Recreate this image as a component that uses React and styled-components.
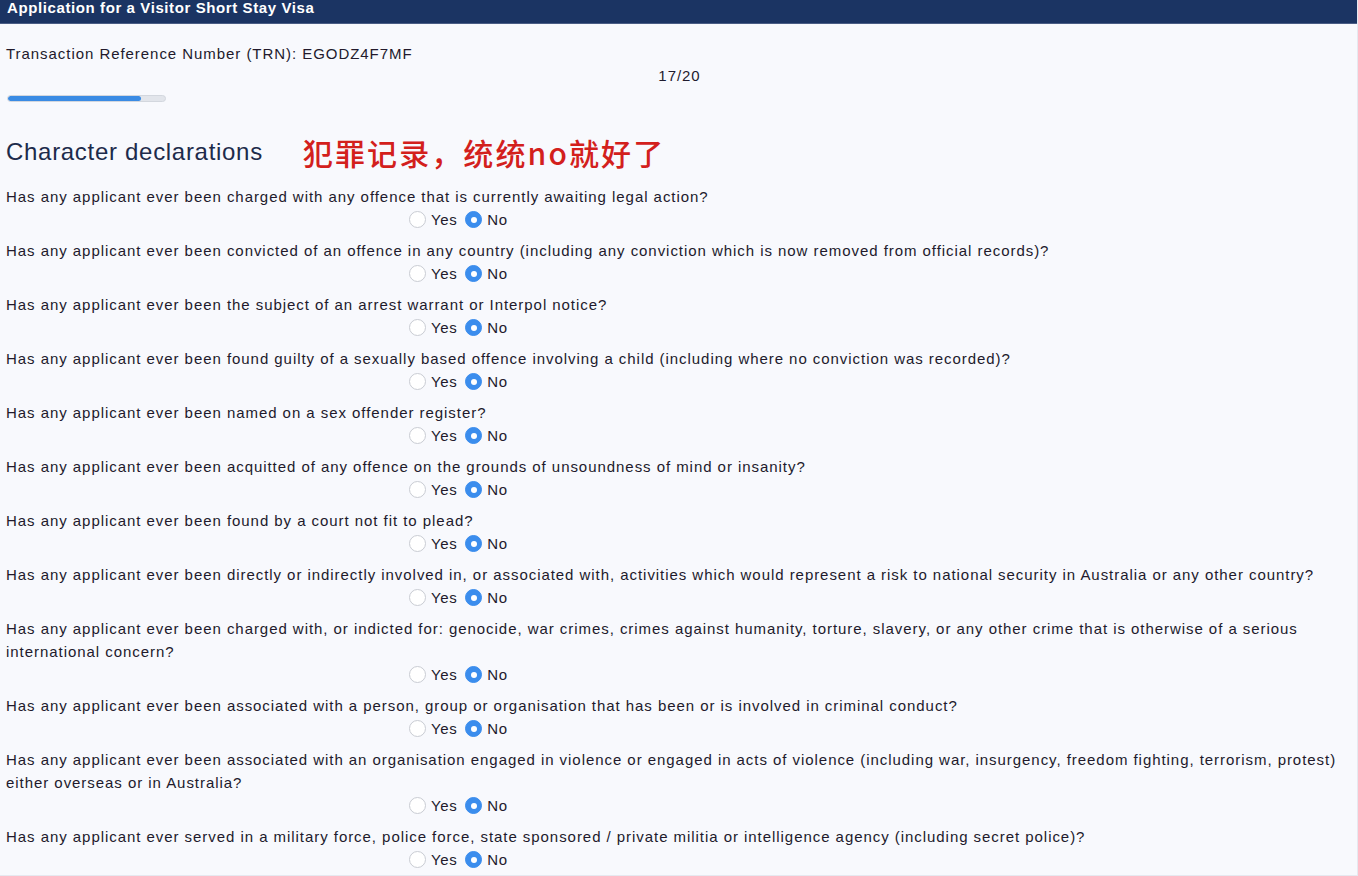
import React from "react";
import styled, { createGlobalStyle } from "styled-components";

const Global = createGlobalStyle`
  html, body { margin: 0; padding: 0; background: #f8f9fd; }
  body { font-family: "Liberation Sans", Arial, sans-serif; color: #1f1b2e; overflow: hidden; }
`;

const Page = styled.div`
  width: 1358px;
  height: 876px;
  box-sizing: border-box;
  background: #f8f9fd;
  border-right: 1px solid #e6e9f0;
  border-bottom: 1px solid #e6e9f0;
  overflow: hidden;
`;

const Header = styled.div`
  height: 23px;
  background: #1b3463;
  border-bottom: 1px solid #4a5d85;
  display: flex;
  align-items: flex-end;
  padding: 0 7px;
  overflow: hidden;
`;

const HeaderTitle = styled.div`
  color: #ffffff;
  font-weight: bold;
  font-size: 15px;
  line-height: 15px;
  margin-bottom: 8px;
  letter-spacing: 0.6px;
`;

const Body = styled.div`
  padding: 0 6px;
  font-size: 15px;
  letter-spacing: 0.95px;
`;

const Trn = styled.div`
  margin-top: 21px;
  line-height: 18px;
  color: #221a2c;
`;

const Counter = styled.div`
  text-align: center;
  line-height: 18px;
  margin-top: 4px;
  padding-left: 2px;
`;

const Progress = styled.div`
  width: 159px;
  height: 7px;
  margin-top: 10px;
  margin-left: 1px;
  border-radius: 4px;
  background: #e2e5eb;
  border: 1px solid #d3d7de;
  overflow: hidden;
  box-sizing: border-box;
`;

const ProgressFill = styled.div`
  height: 100%;
  background: #3a8be4;
  border-radius: 4px;
`;

const HeadingRow = styled.div`
  display: flex;
  align-items: center;
  gap: 40px;
  margin-top: 33px;
  height: 34px;
`;

const Heading = styled.h1`
  margin: 0;
  font-family: "Liberation Sans", Arial, sans-serif;
  font-weight: normal;
  font-size: 24px;
  letter-spacing: 0.7px;
  color: #1d2b4b;
`;

const Note = styled.div`
  font-family: "Noto Sans CJK SC", "Liberation Sans", sans-serif;
  font-size: 30px;
  color: #d3201c;
  font-weight: 500;
  letter-spacing: 2.1px;
`;

const List = styled.div`
  margin-top: 16px;
`;

const Question = styled.div`
  padding-bottom: 8px;
`;

const QText = styled.div`
  line-height: 23px;
  color: #221a2c;
`;

const Options = styled.div`
  display: flex;
  align-items: center;
  height: 23px;
  padding-left: 403px;
  color: #221a2c;
  letter-spacing: 0.6px;
`;

const Option = styled.label`
  display: flex;
  align-items: center;
  gap: 5px;
  margin-right: 8px;
`;

const Radio = styled.span`
  width: 17px;
  height: 17px;
  border-radius: 50%;
  box-sizing: border-box;
  display: flex;
  align-items: center;
  justify-content: center;
  background: ${p => (p.$checked ? "#3b8ded" : "#ffffff")};
  border: 1px solid ${p => (p.$checked ? "#3b8ded" : "#c9ccd3")};
  &::after {
    content: "";
    width: 6px;
    height: 6px;
    border-radius: 50%;
    background: #fff;
    display: ${p => (p.$checked ? "block" : "none")};
  }
`;

const questions = [
  "Has any applicant ever been charged with any offence that is currently awaiting legal action?",
  "Has any applicant ever been convicted of an offence in any country (including any conviction which is now removed from official records)?",
  "Has any applicant ever been the subject of an arrest warrant or Interpol notice?",
  "Has any applicant ever been found guilty of a sexually based offence involving a child (including where no conviction was recorded)?",
  "Has any applicant ever been named on a sex offender register?",
  "Has any applicant ever been acquitted of any offence on the grounds of unsoundness of mind or insanity?",
  "Has any applicant ever been found by a court not fit to plead?",
  "Has any applicant ever been directly or indirectly involved in, or associated with, activities which would represent a risk to national security in Australia or any other country?",
  "Has any applicant ever been charged with, or indicted for: genocide, war crimes, crimes against humanity, torture, slavery, or any other crime that is otherwise of a serious international concern?",
  "Has any applicant ever been associated with a person, group or organisation that has been or is involved in criminal conduct?",
  "Has any applicant ever been associated with an organisation engaged in violence or engaged in acts of violence (including war, insurgency, freedom fighting, terrorism, protest) either overseas or in Australia?",
  "Has any applicant ever served in a military force, police force, state sponsored / private militia or intelligence agency (including secret police)?",
];

export default function App() {
  return (
    <Page>
      <Global />
      <Header>
        <HeaderTitle>Application for a Visitor Short Stay Visa</HeaderTitle>
      </Header>
      <Body>
        <Trn>Transaction Reference Number (TRN): EGODZ4F7MF</Trn>
        <Counter>17/20</Counter>
        <Progress>
          <ProgressFill style={{ width: `${(17 / 20) * 100}%` }} />
        </Progress>
        <HeadingRow>
          <Heading>Character declarations</Heading>
          <Note>犯罪记录，统统no就好了</Note>
        </HeadingRow>
        <List>
          {questions.map((q, i) => (
            <Question key={i}>
              <QText>{q}</QText>
              <Options>
                <Option>
                  <Radio />
                  Yes
                </Option>
                <Option>
                  <Radio $checked />
                  No
                </Option>
              </Options>
            </Question>
          ))}
        </List>
      </Body>
    </Page>
  );
}
